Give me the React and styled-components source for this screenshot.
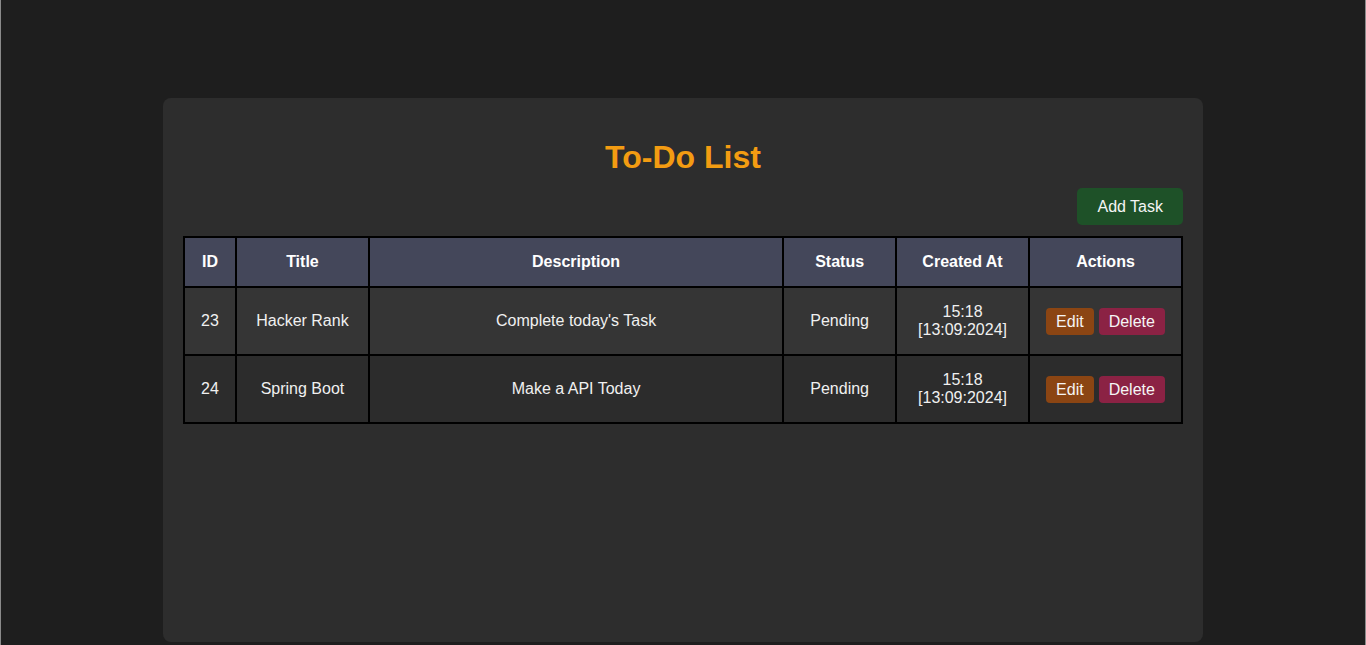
import React from "react"
import styled, { createGlobalStyle } from "styled-components"

const GlobalStyle = createGlobalStyle`
  html, body {
    margin: 0;
    padding: 0;
    background: #1e1e1e;
    font-family: "Liberation Sans", Arial, sans-serif;
    color: #f0f0f0;
    overflow: hidden;
  }
`

const Page = styled.div`
  height: 645px;
  box-sizing: border-box;
  padding-top: 98px;
  border-left: 1px solid #8a8a8a;
  border-right: 1px solid #8a8a8a;
`

const Container = styled.div`
  width: 1040px;
  height: 544px;
  box-sizing: border-box;
  margin: 0 auto;
  padding: 20px;
  background: #2d2d2d;
  border-radius: 8px;
`

const Heading = styled.h1`
  margin: 21px 0 12px;
  text-align: center;
  color: #f39c12;
  font-size: 32px;
  line-height: 37px;
  font-weight: bold;
`

const Toolbar = styled.div`
  display: flex;
  justify-content: flex-end;
  margin-bottom: 11px;
`

const Button = styled.button`
  border: none;
  border-radius: ${p => (p.$big ? "5px" : "4px")};
  background: ${p => p.$bg};
  color: #f5f5f5;
  font-family: "Liberation Sans", Arial, sans-serif;
  font-size: 16px;
  line-height: 19px;
  padding: ${p => (p.$big ? "9px 20px" : "4px 10px")};
  cursor: pointer;
  vertical-align: middle;
  & + & {
    margin-left: 5px;
  }
`

const Table = styled.table`
  width: 1000px;
  border-collapse: collapse;
  font-size: 16px;
`

const Th = styled.th`
  background: #44475a;
  color: #ffffff;
  font-weight: bold;
  border: 2px solid #000;
  padding: 15px;
  line-height: 18px;
  width: ${p => p.$w}px;
  box-sizing: border-box;
`

const Row = styled.tr`
  background: ${p => (p.$odd ? "#353535" : "#2c2c2c")};
`

const Td = styled.td`
  border: 2px solid #000;
  padding: 15px;
  line-height: 18px;
  text-align: center;
  white-space: nowrap;
`

const columns = [
  ["ID", 52],
  ["Title", 133],
  ["Description", 416],
  ["Status", 113],
  ["Created At", 133],
  ["Actions", 153],
]

const tasks = [
  { id: 23, title: "Hacker Rank", description: "Complete today's Task", status: "Pending", time: "15:18", date: "[13:09:2024]" },
  { id: 24, title: "Spring Boot", description: "Make a API Today", status: "Pending", time: "15:18", date: "[13:09:2024]" },
]

export default function App() {
  return (
    <Page>
      <GlobalStyle />
      <Container>
        <Heading>To-Do List</Heading>
        <Toolbar>
          <Button $big $bg="#1e5128">Add Task</Button>
        </Toolbar>
        <Table>
          <thead>
            <tr>
              {columns.map(([name, w]) => (
                <Th key={name} $w={w}>{name}</Th>
              ))}
            </tr>
          </thead>
          <tbody>
            {tasks.map((t, i) => (
              <Row key={t.id} $odd={i % 2 === 0}>
                <Td>{t.id}</Td>
                <Td>{t.title}</Td>
                <Td>{t.description}</Td>
                <Td>{t.status}</Td>
                <Td>{t.time}<br />{t.date}</Td>
                <Td>
                  <Button $bg="#8b4513">Edit</Button>
                  <Button $bg="#8b2244">Delete</Button>
                </Td>
              </Row>
            ))}
          </tbody>
        </Table>
      </Container>
    </Page>
  )
}
